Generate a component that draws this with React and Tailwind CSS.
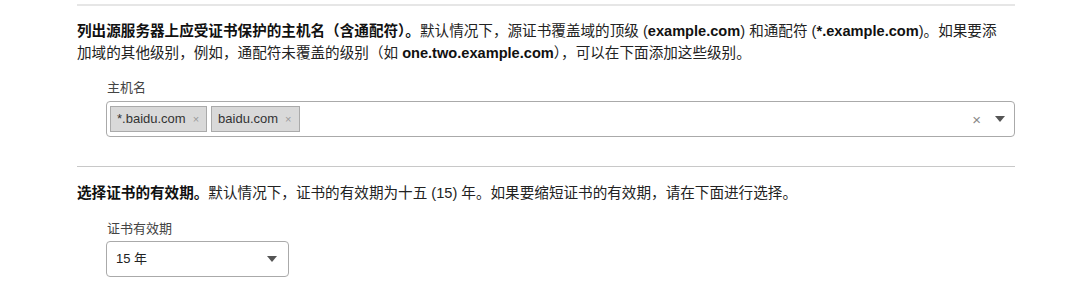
export default function App() {
  const font = { fontFamily: '"Liberation Sans", "Noto Sans CJK SC", sans-serif' };
  const Caret = () => (
    <svg width="10" height="6" viewBox="0 0 10 6" className="block">
      <path d="M0 0 L10 0 L5 6 Z" fill="#555" />
    </svg>
  );
  const Tag = ({ text }) => (
    <div className="flex h-[26px] items-center border border-[#aaaaaa] bg-[#d9d9d9] pl-[6px] pr-[7px] text-[13px] text-[#333]">
      <span>{text}</span>
      <span className="ml-[7px] text-[11px] text-[#999]">×</span>
    </div>
  );
  return (
    <div className="min-h-[289px] w-[1080px] bg-white pt-[4px]" style={font}>
      <div className="ml-[77px] w-[938px]">
        <div className="border-t-2 border-[#e6e6e6] pt-[14px]">
          <p className="whitespace-nowrap text-[14.6px] leading-[22px] text-[#222]">
            <b className="font-bold text-[#111]">列出源服务器上应受证书保护的主机名（含通配符）。</b>
            默认情况下，源证书覆盖域的顶级 (<b className="font-bold text-[#111]">example.com</b>) 和通配符 (<b className="font-bold text-[#111]">*.example.com</b>)。如果要添
            <br />
            加域的其他级别，例如，通配符未覆盖的级别（如 <b className="font-bold text-[#111]">one.two.example.com</b>），可以在下面添加这些级别。
          </p>
          <div className="ml-[30px] mt-[15px] text-[13px] leading-[18px] text-[#444]">主机名</div>
          <div className="ml-[29px] mt-[4px] flex h-[36px] items-center rounded-[4px] border border-[#aaaaaa] pl-[3px] pr-[9px]">
            <div className="flex flex-1 gap-[4px]">
              <Tag text="*.baidu.com" />
              <Tag text="baidu.com" />
            </div>
            <span className="mr-[14px] text-[15px] leading-none text-[#888]">×</span>
            <Caret />
          </div>
        </div>
        <div className="mt-[29px] border-t border-[#c8c8c8] pt-[15px]">
          <p className="whitespace-nowrap text-[14.6px] leading-[22px] text-[#222]">
            <b className="font-bold text-[#111]">选择证书的有效期。</b>
            默认情况下，证书的有效期为十五 (15) 年。如果要缩短证书的有效期，请在下面进行选择。
          </p>
          <div className="ml-[30px] mt-[16px] text-[13px] leading-[18px] text-[#444]">证书有效期</div>
          <div className="ml-[29px] mt-[3px] flex h-[36px] w-[183px] items-center justify-between rounded-[4px] border border-[#aaaaaa] pl-[9px] pr-[11px]">
            <span className="text-[13px] text-[#222]">15 年</span>
            <Caret />
          </div>
        </div>
      </div>
    </div>
  );
}
